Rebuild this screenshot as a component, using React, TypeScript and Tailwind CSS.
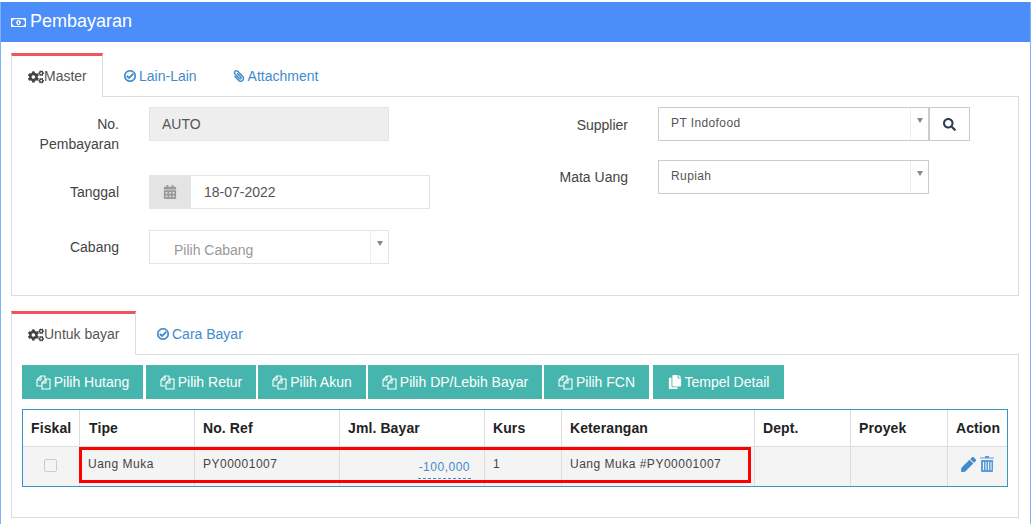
import { FaCogs, FaRegCheckCircle, FaPaperclip, FaCopy, FaCalendarAlt, FaSearch, FaPen, FaRegMoneyBillAlt } from "react-icons/fa";

const pickButtons = [
  { label: "Pilih Hutang", width: "w-[121px]", margin: "" },
  { label: "Pilih Retur", width: "w-[110px]", margin: "ml-[3px]" },
  { label: "Pilih Akun", width: "w-[108px]", margin: "ml-[2px]" },
  { label: "Pilih DP/Lebih Bayar", width: "w-[174px]", margin: "ml-[2px]" },
  { label: "Pilih FCN", width: "w-[105px]", margin: "ml-[2px]" },
];

const columns = [
  { label: "Fiskal", width: "w-[56px]", pad: "pl-[8px]" },
  { label: "Tipe", width: "w-[115px]", pad: "pl-[9px] border-l border-[#dddddd]" },
  { label: "No. Ref", width: "w-[145px]", pad: "pl-[8px] border-l border-[#dddddd]" },
  { label: "Jml. Bayar", width: "w-[145px]", pad: "pl-[8px] border-l border-[#dddddd]" },
  { label: "Kurs", width: "w-[77px]", pad: "pl-[8px] border-l border-[#dddddd]" },
  { label: "Keterangan", width: "w-[193px]", pad: "pl-[8px] border-l border-[#dddddd]" },
  { label: "Dept.", width: "w-[96px]", pad: "pl-[8px] border-l border-[#dddddd]" },
  { label: "Proyek", width: "w-[97px]", pad: "pl-[8px] border-l border-[#dddddd]" },
  { label: "Action", width: "flex-1", pad: "pl-[8px] border-l border-[#dddddd]" },
];

function Caret() {
  return (
    <div className="w-[18px] self-stretch border-l border-[#eeeeee] flex justify-center pt-[10px]">
      <div className="w-0 h-0 border-x-[3.5px] border-x-transparent border-t-[5px] border-t-[#888888]" />
    </div>
  );
}

function FilesIcon() {
  return (
    <svg width="15" height="15" viewBox="0 0 15 15" fill="none" stroke="currentColor" strokeWidth="1.1" strokeLinejoin="round">
      <path d="M5.500 11H1V5L5 1H9V4" />
      <path d="M1 5H5V1" />
      <path d="M6 14V8L10 4H14V14Z" />
      <path d="M6 8H10V4" />
    </svg>
  );
}

function TrashIcon() {
  return (
    <svg width="14" height="16" viewBox="0 0 14 16" fill="#5a9bd8">
      <path d="M5 0h4v1.500h5V2.500H0V1.500h5z" />
      <path d="M1 4h12v11a1 1 0 0 1-1 1H2a1 1 0 0 1-1-1zM3 6v8h1V6zM5.500 6v8h1V6zM8 6v8h1V6zM10.500 6v8h1V6z" fillRule="evenodd" />
    </svg>
  );
}

export default function App() {
  return (
    <div className="w-[1032px] h-[524px] overflow-hidden bg-white pt-[2px] font-['Liberation_Sans',sans-serif] text-[14px] text-[#333333]">
      <div className="w-[1031px] h-[522px] border-x-[1px] border-[#7fb0fa] mr-[1px]">
        <div className="h-[40px] bg-[#4b8ef9] text-white text-[18px] flex items-center pl-[10px] gap-[4px] pb-[2px]">
          <FaRegMoneyBillAlt className="text-[15px] mt-[3px]" />
          <span>Pembayaran</span>
        </div>

        <div className="pl-[10px] pr-[11px] pt-[11px]">
          {/* Master */}
          <div className="flex h-[43px]">
            <div className="w-[92px] border-x border-[#dddddd] border-t-[3px] border-t-[#ef5560] bg-white h-[44px] flex items-center pl-[16px] relative z-10">
              <FaCogs className="text-[16px] text-[#444444]" />
              <span className="text-[#555555]">Master</span>
            </div>
            <div className="flex items-center pl-[21px] pt-[3px] text-[#428bca] gap-[3px]">
              <FaRegCheckCircle className="text-[12px]" stroke="currentColor" strokeWidth={30} />
              <span>Lain-Lain</span>
            </div>
            <div className="flex items-center pl-[36px] pt-[3px] text-[#428bca] gap-[3px]">
              <FaPaperclip className="text-[12px] -scale-x-100" />
              <span>Attachment</span>
            </div>
          </div>
          <div className="h-[200px] border border-[#dddddd] flex">
            <div className="w-[546px] pt-[10px]">
              <div className="flex h-[68px]">
                <div className="w-[107px] text-right leading-[20px] pt-[7px] text-[#444444]">
                  No.<br />Pembayaran
                </div>
                <div className="ml-[30px] w-[240px] h-[34px] bg-[#eeeeee] border border-[#e5e5e5] pl-[12px] flex items-center text-[#555555]">
                  AUTO
                </div>
              </div>
              <div className="flex h-[55px]">
                <div className="w-[107px] text-right pt-[7px] text-[#444444]">Tanggal</div>
                <div className="ml-[30px] w-[281px] h-[34px] border border-[#e5e5e5] flex items-center text-[#555555]">
                  <div className="w-[42px] h-full bg-[#e4e4e4] flex items-center justify-center -ml-[1px]">
                    <FaCalendarAlt className="text-[14px] text-[#999999]" />
                  </div>
                  <span className="pl-[13px]">18-07-2022</span>
                </div>
              </div>
              <div className="flex">
                <div className="w-[107px] text-right pt-[7px] text-[#444444]">Cabang</div>
                <div className="ml-[30px] w-[240px] h-[34px] border border-[#e5e5e5] flex items-start">
                  <span className="flex-1 pl-[24px] pt-[9px] text-[#999999]">Pilih Cabang</span>
                  <Caret />
                </div>
              </div>
            </div>
            <div className="flex-1 pt-[10px]">
              <div className="flex h-[53px]">
                <div className="w-[70px] text-right pt-[8px] text-[#444444]">Supplier</div>
                <div className="ml-[30px] w-[271px] h-[34px] border border-[#cccccc] flex items-start">
                  <span className="flex-1 pl-[12px] pt-[6px] text-[12px] tracking-[0.4px] text-[#555555]">PT Indofood</span>
                  <Caret />
                </div>
                <div className="w-[41px] h-[34px] border border-[#cccccc] flex items-center justify-center">
                  <FaSearch className="text-[13px] text-[#2c3e50]" />
                </div>
              </div>
              <div className="flex">
                <div className="w-[70px] text-right pt-[7px] whitespace-nowrap text-[#444444]">Mata Uang</div>
                <div className="ml-[30px] w-[271px] h-[34px] border border-[#cccccc] flex items-start">
                  <span className="flex-1 pl-[12px] pt-[6px] text-[12px] tracking-[0.4px] text-[#555555]">Rupiah</span>
                  <Caret />
                </div>
              </div>
            </div>
          </div>

          {/* Untuk bayar */}
          <div className="flex h-[43px] mt-[15px]">
            <div className="w-[125px] border-x border-[#dddddd] border-t-[3px] border-t-[#ef5560] bg-white h-[44px] flex items-center pl-[16px] relative z-10">
              <FaCogs className="text-[16px] text-[#444444]" />
              <span className="text-[#555555]">Untuk bayar</span>
            </div>
            <div className="flex items-center pl-[21px] pt-[3px] text-[#428bca] gap-[3px]">
              <FaRegCheckCircle className="text-[12px]" stroke="currentColor" strokeWidth={30} />
              <span>Cara Bayar</span>
            </div>
          </div>
          <div className="h-[164px] border border-[#dddddd] pl-[10px] pr-[10px] pt-[10px]">
            <div className="flex h-[34px]">
              {pickButtons.map((b) => (
                <div key={b.label} className={`${b.width} ${b.margin} bg-[#45b5ad] text-white flex items-center justify-center gap-[3px]`}>
                  <FilesIcon />
                  <span>{b.label}</span>
                </div>
              ))}
              <div className="w-[131px] ml-[4px] bg-[#45b5ad] text-white flex items-center justify-center gap-[3px]">
                <FaCopy className="text-[14px]" />
                <span>Tempel Detail</span>
              </div>
            </div>

            <div className="mt-[10px] h-[78px] border border-[#3a94c4] relative">
              <div className="flex h-[37px] border-b-[1px] border-[#dddddd] font-bold tracking-[0.1px] text-[#222222]">
                {columns.map((c) => (
                  <div key={c.label} className={`${c.width} ${c.pad} flex items-center`}>
                    {c.label}
                  </div>
                ))}
              </div>
              <div className="flex h-[39px] bg-[#f4f4f4] text-[12px] tracking-[0.5px] text-[#444444]">
                <div className="w-[56px] pl-[21px] pt-[12px]">
                  <div className="w-[13px] h-[13px] border border-[#cccccc] rounded-[2px] bg-[#f4f4f4]" />
                </div>
                <div className="w-[115px] border-l border-[#dddddd] pl-[8px] pt-[8px]">Uang Muka</div>
                <div className="w-[145px] border-l border-[#dddddd] pl-[8px] pt-[8px]">PY00001007</div>
                <div className="w-[145px] border-l border-[#dddddd] pr-[13px] pt-[11px] flex justify-end">
                  <span className="h-[21px] border-b border-dashed border-[#428bca] text-[#428bca] px-[1px]">-100,000</span>
                </div>
                <div className="w-[77px] border-l border-[#dddddd] pl-[8px] pt-[8px]">1</div>
                <div className="w-[193px] border-l border-[#dddddd] pl-[8px] pt-[8px]">Uang Muka #PY00001007</div>
                <div className="w-[96px] border-l border-[#dddddd]" />
                <div className="w-[97px] border-l border-[#dddddd]" />
                <div className="flex-1 border-l border-[#dddddd] pl-[13px] pt-[9px] flex items-start gap-[4px]">
                  <FaPen className="text-[15px] text-[#428bca] mt-[1px]" />
                  <TrashIcon />
                </div>
              </div>
              {/* highlight drawn over the row */}
              <div className="absolute left-[56px] top-[37px] w-[672px] h-[36px] border-[3px] border-[#ff0000]" />
            </div>
          </div>
        </div>
      </div>
    </div>
  );
}
